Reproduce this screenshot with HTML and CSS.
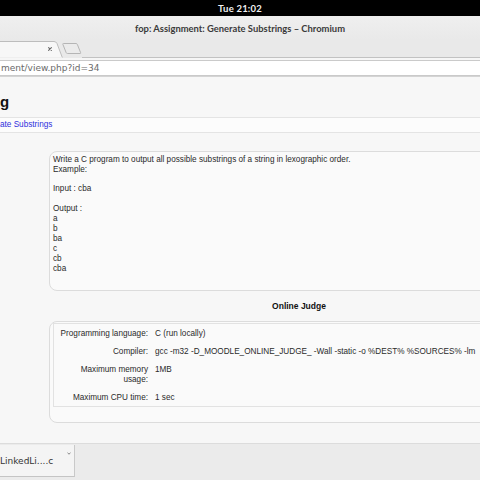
FILE: index.html
```html
<!DOCTYPE html>
<html>
<head>
<meta charset="utf-8">
<title>fop: Assignment: Generate Substrings</title>
<link rel="stylesheet" href="styles.css">
</head>
<body>
<div class="screen">
  <div class="topbar"><span class="clock">Tue 21:02</span></div>
  <div class="titlebar">fop: Assignment: Generate Substrings – Chromium</div>
  <div class="tabstrip">
    <svg class="tabs-svg" width="480" height="18" viewBox="0 0 480 18">
      <path d="M-6 17.5 H62 M82 17.5 H480" stroke="#c2c2c2" stroke-width="1" fill="none"/>
      <path d="M-6 18 V1.5 H54 Q56 1.5 57 3.5 L62.5 18 Z" fill="#f7f7f7" stroke="#bdbdbd" stroke-width="1"/>
      <path d="M-6 18 H62.5" stroke="#f6f6f6" stroke-width="1.5"/>
      <path d="M48.6 7.6 L51.4 10.4 M51.4 7.6 L48.6 10.4" stroke="#666" stroke-width="1.1" stroke-linecap="round"/>
      <path d="M63.5 3.5 H76 Q77 3.5 77.4 4.5 L80.6 12.6 Q81 13.5 80 13.5 H67.5 Q66.5 13.5 66.1 12.5 L62.9 4.4 Q62.5 3.5 63.5 3.5 Z" fill="#ebebeb" stroke="#b5b5b5" stroke-width="1"/>
    </svg>
  </div>
  <div class="toolbar">
    <div class="omnibox">ment/view.php?id=34</div>
  </div>
  <div class="page">
    <div class="page-head"><h1 class="course">g</h1></div>
    <div class="breadcrumb"><a class="crumb" href="#">ate Substrings</a></div>
    <div class="main">
      <div class="box intro">
        <p class="para">Write a C program to output all possible substrings of a string in lexographic order.<br>Example:</p>
        <p class="para">Input : cba<br><br>Output :<br>a<br>b<br>ba<br>c<br>cb<br>cba</p>
      </div>
      <h2 class="judge-title">Online Judge</h2>
      <div class="box judge">
        <div class="judge-grid">
          <div class="label">Programming language:</div><div class="value">C (run locally)</div>
          <div class="label">Compiler:</div><div class="value">gcc -m32 -D_MOODLE_ONLINE_JUDGE_ -Wall -static -o %DEST% %SOURCES% -lm</div>
          <div class="label">Maximum memory usage:</div><div class="value">1MB</div>
          <div class="label">Maximum CPU time:</div><div class="value">1 sec</div>
        </div>
      </div>
    </div>
  </div>
  <div class="downloads">
    <div class="dl-item">
      <span class="dl-name">LinkedLi....c</span>
      <svg class="dl-arrow" width="4" height="3" viewBox="0 0 4 3"><path d="M0.5 0.8 L2 2.2 L3.5 0.8" stroke="#777" stroke-width="0.9" fill="none"/></svg>
    </div>
  </div>
</div>
</body>
</html>
```
FILE: styles.css
```css
* { box-sizing: border-box; margin: 0; padding: 0; }
html, body { width: 480px; height: 480px; overflow: hidden; }
body { font-family: "Liberation Sans", Arial, sans-serif; background: #ebebeb; color: #2a2a2a; }

.screen { display: flex; flex-direction: column; height: 480px; width: 480px; }

.topbar {
  height: 16px; background: #000;
  display: flex; align-items: center; justify-content: center;
}
.clock { color: #f2f2f2; font: 700 9.5px/1 Lato, "DejaVu Sans", sans-serif; letter-spacing: 0.2px; padding-top: 1px; }

.titlebar {
  height: 24px;
  background: linear-gradient(#efefef, #e9e9e9);
  display: flex; align-items: center; justify-content: center;
  font: 700 9.4px/1 Lato, "DejaVu Sans", sans-serif;
  color: #3a3a3a;
  padding-top: 2px;
}

.tabstrip { height: 18px; background: #e9e9e9; display: flex; }
.tabs-svg { display: block; }

.toolbar {
  height: 19px; background: #f6f6f6;
  padding: 2px 0 1px;
  border-bottom: 1px solid #d4d4d4;
}
.omnibox {
  height: 16px; margin-left: -4px; margin-right: -4px;
  background: #fff; border: 1px solid #cacaca; border-radius: 2px;
  font: 9px/14px "DejaVu Sans", sans-serif; color: #6a6a6a;
  padding-left: 4px;
}

.page {
  flex: 1; background: #f7f7f7; overflow: hidden;
  border-bottom: 1px solid #dcdcdc;
}
.page-head { height: 40px; padding-top: 10px; }
.course { font: 700 15px/30px "Liberation Sans", Arial, sans-serif; color: #111; }

.breadcrumb {
  height: 16px; background: #fcfcfc;
  border-top: 1px solid #e4e4e4; border-bottom: 1px solid #e4e4e4;
  font-size: 8.2px; line-height: 14px;
}
.crumb { color: #2f2fdc; text-decoration: none; }

.main { padding: 18px 0 0 49px; width: 549px; font-size: 8.2px; line-height: 10px; }

.box { background: #fafafa; border: 1px solid #dcdcdc; border-radius: 8px; }
.intro { padding: 3px 3px 16px 3px; }
.para + .para { margin-top: 9px; }

.judge-title { font-size: 8.5px; font-weight: 700; line-height: 10px; text-align: center; margin: 10px 0; color: #111; }

.judge { padding: 1px 3px 15px 3px; }
.judge-grid {
  display: grid; grid-template-columns: 101px 1fr;
  border: 1px solid #e2e2e2;
}
.label { padding: 5px 7px 3px 4px; text-align: right; }
.value { padding: 5px 0 3px; white-space: nowrap; }

.downloads { height: 36px; background: #ebebeb; padding-top: 1px; }
.dl-item {
  width: 75px; height: 32px; background: #f4f4f4;
  border-right: 1px solid #c9c9c9; border-bottom: 1px solid #c4c4c4;
  display: flex; padding-right: 3px;
}
.dl-name { flex: 1; align-self: center; font: 9px/1 "DejaVu Sans", sans-serif; color: #333; padding-top: 2px; }
.dl-arrow { margin-top: 7px; }
```
